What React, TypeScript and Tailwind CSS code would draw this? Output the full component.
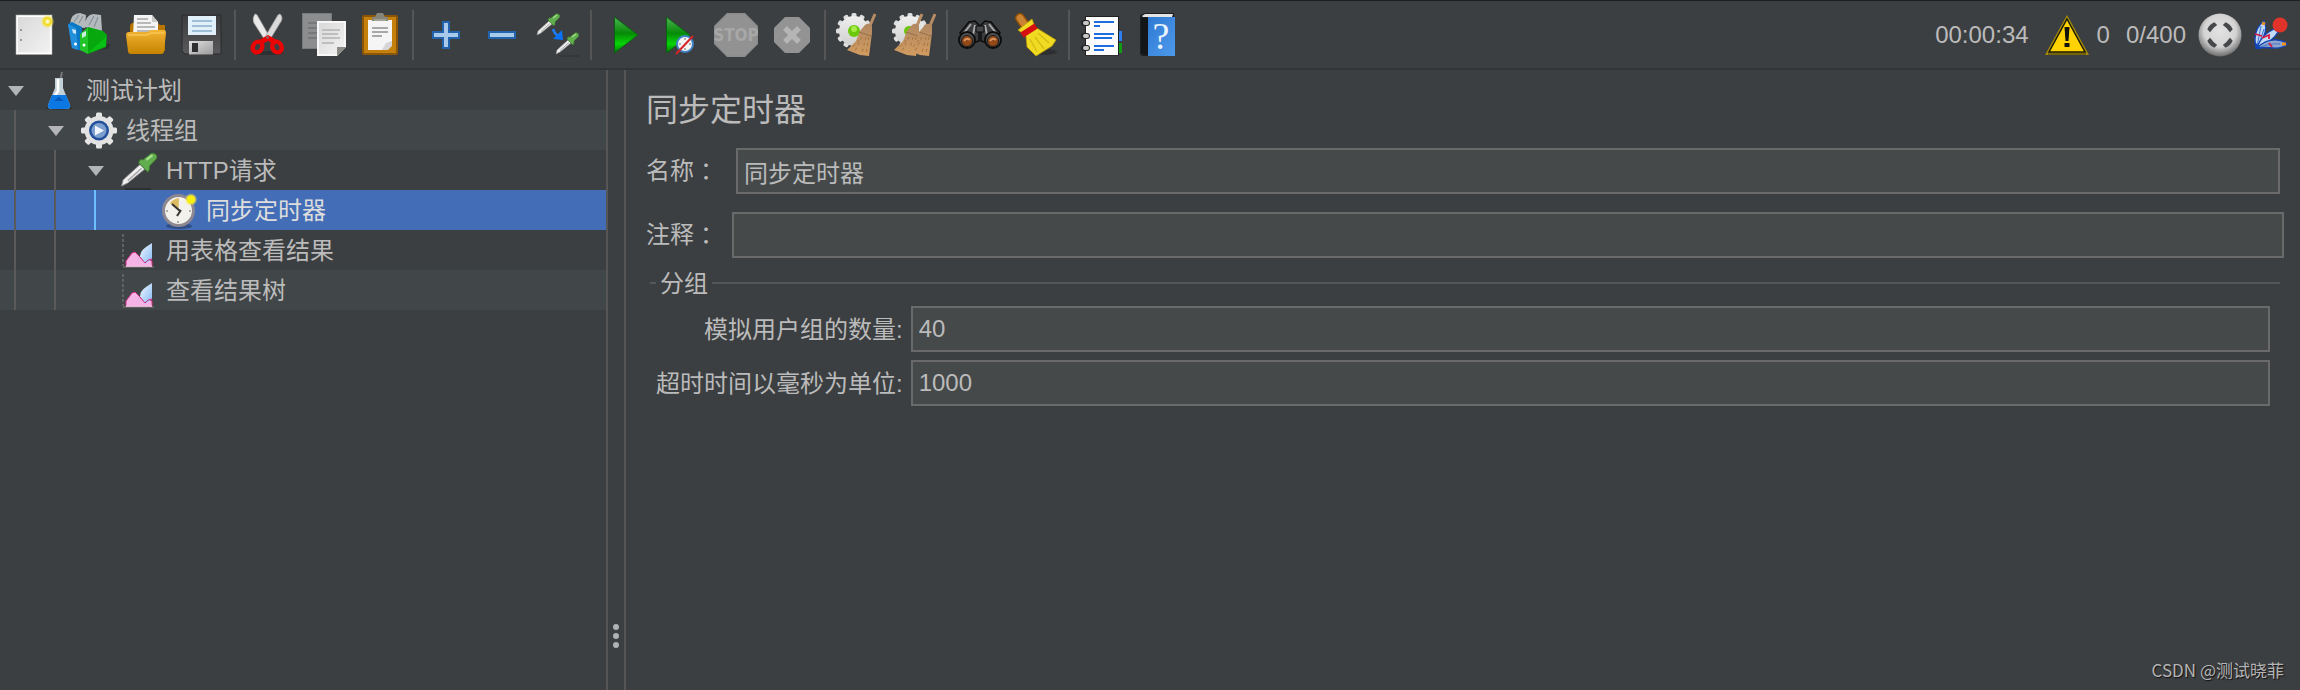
import type { ReactNode } from 'react';

interface IconProps {
  children: ReactNode;
  size?: string;
  box?: string;
}

function Icon({ children, size = 'h-11 w-11', box = '0 0 44 44' }: IconProps) {
  return (
    <svg className={`${size} shrink-0`} viewBox={box} aria-hidden="true">
      {children}
    </svg>
  );
}

interface TeethProps {
  cx: number;
  cy: number;
  r: number;
  width: number;
  fill: string;
  angles?: number[];
}

function Teeth({ cx, cy, r, width, fill, angles = [0, 45, 90, 135] }: TeethProps) {
  return (
    <>
      {angles.map((angle) => (
        <rect
          key={angle}
          x={cx - width / 2}
          y={cy - r}
          width={width}
          height={r * 2}
          rx="1.5"
          fill={fill}
          transform={`rotate(${angle} ${cx} ${cy})`}
        />
      ))}
    </>
  );
}

function Dropper() {
  return (
    <>
      <path d="M1 22l1-4L13 8l3 3L5 20z" fill="#efefef" stroke="#8d8d8d" strokeWidth="0.6" />
      <path d="M5 18.500L14 10.500" stroke="#a9a9a9" strokeWidth="1" />
      <path d="M12 7l6 6 1-2 0-2 4-4c2-2 0-5-3-4l-5 4-2 0z" fill="#62ad4e" stroke="#3d7d2d" strokeWidth="0.6" />
      <path d="M17 5l4-3" stroke="#a5e08d" strokeWidth="1.500" />
    </>
  );
}

function Shades() {
  return (
    <svg className="absolute h-0 w-0" aria-hidden="true">
      <defs>
        <linearGradient id="paper" x1="0" y1="0" x2="1" y2="1">
          <stop offset="0" stopColor="#d9d9d9" />
          <stop offset="1" stopColor="#f2f2f2" />
        </linearGradient>
        <linearGradient id="folder" x1="0" y1="0" x2="0" y2="1">
          <stop offset="0" stopColor="#f3b535" />
          <stop offset="1" stopColor="#c58300" />
        </linearGradient>
        <linearGradient id="metal" x1="0" y1="0" x2="1" y2="1">
          <stop offset="0" stopColor="#e0e0e0" />
          <stop offset="1" stopColor="#9a9a9a" />
        </linearGradient>
        <linearGradient id="disk" x1="0" y1="0" x2="0" y2="1">
          <stop offset="0" stopColor="#3c3c3e" />
          <stop offset="1" stopColor="#59595c" />
        </linearGradient>
        <linearGradient id="go" x1="0" y1="0" x2="0" y2="1">
          <stop offset="0" stopColor="#4fb455" />
          <stop offset="0.45" stopColor="#078a07" />
          <stop offset="0.75" stopColor="#08d508" />
          <stop offset="1" stopColor="#047004" />
        </linearGradient>
        <linearGradient id="cover" x1="0" y1="0" x2="1" y2="1">
          <stop offset="0" stopColor="#2f79d2" />
          <stop offset="1" stopColor="#4d9aec" />
        </linearGradient>
        <linearGradient id="ice" x1="0" y1="0" x2="1" y2="1">
          <stop offset="0" stopColor="#f2faff" />
          <stop offset="1" stopColor="#86b8f5" />
        </linearGradient>
        <linearGradient id="bristle" x1="0" y1="0" x2="0" y2="1">
          <stop offset="0" stopColor="#b08862" />
          <stop offset="1" stopColor="#d29c60" />
        </linearGradient>
        <linearGradient id="gear" x1="0" y1="0" x2="0" y2="1">
          <stop offset="0" stopColor="#efefef" />
          <stop offset="1" stopColor="#cfcfcf" />
        </linearGradient>
        <radialGradient id="glow">
          <stop offset="0" stopColor="#fffde0" />
          <stop offset="0.5" stopColor="#f5e34a" />
          <stop offset="1" stopColor="#f5e34a" stopOpacity="0.25" />
        </radialGradient>
        <radialGradient id="dome" cx="0.5" cy="0.4" r="0.62">
          <stop offset="0" stopColor="#e2e2e2" />
          <stop offset="0.6" stopColor="#d4d4d4" />
          <stop offset="1" stopColor="#626262" />
        </radialGradient>
      </defs>
    </svg>
  );
}

function NewIcon() {
  return (
    <Icon>
      <rect x="4" y="2" width="36" height="39.500" fill="#fff" stroke="#aaa" strokeWidth="0.6" />
      <rect x="6" y="4" width="32" height="35.500" fill="url(#paper)" />
      <path d="M8 17h2M8 27h2" stroke="#999" strokeWidth="2" />
      <circle cx="35.500" cy="8.500" r="6.500" fill="url(#glow)" />
      <circle cx="35.500" cy="8.500" r="3.500" fill="none" stroke="#f2d91c" strokeWidth="1.500" />
    </Icon>
  );
}

function TemplatesIcon() {
  return (
    <Icon>
      <path d="M14 39l26-3 3-4-5-2z" fill="#000" opacity="0.2" />
      <path d="M2 11Q3 0 12 0l6 2-1 13-10-1zM17 14q0-12 8-13l8 1 1 16z" fill="#b4bbbf" />
      <path d="M6 9l5-7M11 10l4-7M21 12l5-9M26 14l4-10" stroke="#8a9297" strokeWidth="1.200" />
      <path d="M0 11l4-2 10 5v24l-10-3z" fill="#0b78c4" />
      <path d="M0 11l8 4 2 22-6-2z" fill="#2390dd" />
      <path d="M12 21l8-7v27l-8-4z" fill="#21c52a" />
      <path d="M20 14l15 4 4 4-1 12-18 7z" fill="#06a80e" />
      <path d="M20 40l18-7V24z" fill="#0bc014" />
      <path d="M4 16l4 1v4l-3-1zM14 20l4-2v5l-4 2z" fill="#e8f6ff" opacity="0.85" />
      <circle cx="7.500" cy="31" r="1.500" fill="#fff" />
      <circle cx="16" cy="32" r="1.500" fill="#fff" />
    </Icon>
  );
}

function OpenIcon() {
  return (
    <Icon>
      <path d="M6 12l2-2h26l2 2h5v26H6z" fill="#b87600" />
      <path d="M10 2h18l6 7v14H9z" fill="#f4f4f4" />
      <path d="M28 2v7h6z" fill="#c9c9c9" />
      <path d="M13 6h11M13 10h14M13 14h18M13 18h18" stroke="#a5a5a5" strokeWidth="1.500" />
      <path d="M2 22q0-3 3-3h18l4-2h13q2 0 2 3l-2 18q0 3-3 3H7q-3 0-3-3z" fill="url(#folder)" />
      <path d="M4 22h19l4-2h13" fill="none" stroke="#ffd068" strokeWidth="1" />
    </Icon>
  );
}

function SaveIcon() {
  return (
    <Icon>
      <path d="M2 2h39v39H5l-3-3z" fill="url(#disk)" stroke="#2b2b2d" strokeWidth="1" />
      <rect x="8" y="3" width="28" height="19" fill="#e2f0fa" />
      <path d="M12 8h20M12 13h20M12 18h20" stroke="#9fbfd9" strokeWidth="2" />
      <rect x="9" y="28" width="24" height="13.500" fill="url(#metal)" />
      <rect x="12" y="30" width="6" height="9" fill="#303032" />
    </Icon>
  );
}

function CutIcon() {
  return (
    <Icon>
      <ellipse cx="22" cy="40" rx="16" ry="2" fill="#000" opacity="0.25" />
      <path d="M9 1q-3 4-1 9l11 17 4-4L11 2z" fill="#e9e9e9" stroke="#b5b5b5" strokeWidth="0.8" />
      <path d="M34 1q4 4 0 9L23 28l-4-4L32 2z" fill="#dadada" stroke="#a8a8a8" strokeWidth="0.8" />
      <path d="M15 29l7-4 7 4" stroke="#e00" strokeWidth="5" fill="none" />
      <ellipse cx="11.500" cy="34" rx="4.500" ry="5.500" fill="none" stroke="#e80505" strokeWidth="4.500" transform="rotate(30 11.500 34)" />
      <ellipse cx="31" cy="34" rx="4.500" ry="5.500" fill="none" stroke="#e80505" strokeWidth="4.500" transform="rotate(-30 31 34)" />
      <circle cx="21.500" cy="24.500" r="1.300" fill="#777" />
    </Icon>
  );
}

function CopyIcon() {
  return (
    <Icon>
      <rect x="0.500" y="0.500" width="29" height="35" fill="#8c8d8e" stroke="#77797a" />
      <path d="M6 10h18M6 15h18M6 20h18M6 25h18" stroke="#707273" strokeWidth="1.500" />
      <path d="M15 8h29v26l-9 9H15z" fill="#f7f7f7" />
      <path d="M17 10h25v23l-8 8H17z" fill="url(#paper)" />
      <path d="M20 17h18M20 21h16M20 25h18M20 30h12" stroke="#b3b3b3" strokeWidth="1.500" />
      <path d="M44 34l-9 9v-9z" fill="#8b8b86" />
    </Icon>
  );
}

function PasteIcon() {
  return (
    <Icon>
      <rect x="5" y="3" width="34" height="38" rx="1" fill="#c47f0c" stroke="#8a5608" strokeWidth="2" />
      <path d="M10 7h24v22l-8 8H10z" fill="#f5f5f5" />
      <path d="M14 15h16M14 19h16M14 23h10" stroke="#8f8f8f" strokeWidth="1.600" />
      <path d="M34 28v5l-4 4h-6l4-7z" fill="#d6d6d6" />
      <path d="M14 8V4h3l2-4h6l2 4h3v4z" fill="#85857a" />
      <path d="M16 7h12" stroke="#acaca0" strokeWidth="1.500" />
    </Icon>
  );
}

function AddIcon() {
  return (
    <Icon>
      <path d="M19 9h6v10h10v6H25v10h-6V25H9v-6h10z" fill="#a9c9ea" stroke="#2163ad" strokeWidth="2" />
    </Icon>
  );
}

function RemoveIcon() {
  return (
    <Icon>
      <rect x="9" y="19" width="26" height="6" fill="#a9c9ea" stroke="#2163ad" strokeWidth="2" />
    </Icon>
  );
}

function ToggleIcon() {
  return (
    <Icon>
      <path d="M23 43h20" stroke="#222" strokeWidth="1" opacity="0.5" />
      <Dropper />
      <g transform="translate(19 19)">
        <Dropper />
      </g>
      <path d="M17 16q2 6 7 8" fill="none" stroke="#1e7cf2" strokeWidth="2.500" />
      <path d="M26 17l1 10-10-1z" fill="#0b72f5" />
    </Icon>
  );
}

function StartIcon() {
  return (
    <Icon>
      <path d="M12.500 4l23.500 18-23.500 18z" fill="url(#go)" stroke="#0a5f12" strokeWidth="1" />
    </Icon>
  );
}

function StartNowIcon() {
  return (
    <Icon>
      <path d="M8.500 4L32 22 8.500 40z" fill="url(#go)" stroke="#0a5f12" strokeWidth="1" />
      <circle cx="27" cy="31" r="8" fill="#f1f3f5" stroke="#3f82c4" strokeWidth="2" />
      <path d="M27 25v2M27 35v2M21 31h2M31 31h2" stroke="#999" strokeWidth="1.500" />
      <path d="M18 41l17-18" stroke="#d8232a" strokeWidth="2" />
    </Icon>
  );
}

function StopIcon() {
  return (
    <Icon>
      <path d="M13 0h18l13 13v18L31 44H13L0 31V13z" fill="#8c8c8c" />
      <path d="M13.500 1.500h17l12 12v17l-12 12h-17l-12-12v-17z" fill="#929292" />
      <text x="22" y="28" textAnchor="middle" fontSize="17" fontWeight="700" fill="#a7a7a7" fontFamily="Liberation Sans Narrow, DejaVu Sans Condensed, sans-serif">
        STOP
      </text>
    </Icon>
  );
}

function ShutdownIcon() {
  return (
    <Icon>
      <path d="M15 4h14l11 11v14L29 40H15L4 29V15z" fill="#939393" />
      <path d="M15 15l14 14M29 15L15 29" stroke="#b5b5b5" strokeWidth="5.500" />
    </Icon>
  );
}

function Bristles({ dx }: { dx: number }) {
  return (
    <g transform={`translate(${dx} 0)`}>
      <path d="M39 1l-6 14" stroke="#b58c63" strokeWidth="3" />
      <path d="M29 12q4-3 7 1l0 7-3 23-9-1-13-5 9-9 4-10z" fill="url(#bristle)" />
      <path d="M26 24l-7 14M30 24l-4 16M33 24l-3 17M23 27l-8 9" stroke="#a8753f" strokeWidth="1" strokeDasharray="3 3" />
      <path d="M23 19l12 4" stroke="#96704a" strokeWidth="1" />
    </g>
  );
}

const fineTeeth = [0, 30, 60, 90, 120, 150];

function ClearIcon() {
  return (
    <Icon>
      <Teeth cx={18} cy={18} r={18} width={5} fill="#dedede" angles={fineTeeth} />
      <circle cx="18" cy="18" r="15" fill="url(#gear)" />
      <circle cx="18" cy="18" r="6" fill="#6cc80b" />
      <circle cx="18" cy="16" r="3" fill="#a5ec48" />
      <Bristles dx={0} />
    </Icon>
  );
}

function ClearAllIcon() {
  return (
    <Icon>
      <Teeth cx={18} cy={18} r={18} width={5} fill="#dedede" angles={fineTeeth} />
      <circle cx="18" cy="18" r="15" fill="url(#gear)" />
      <circle cx="17" cy="18" r="5" fill="#6cc80b" />
      <Bristles dx={-9} />
      <Bristles dx={4} />
    </Icon>
  );
}

function SearchIcon() {
  return (
    <Icon>
      <path d="M11 9l6-1 4 4v16l-6 2L2 20zM33 9l-6-1-4 4v16l6 2 13-10z" fill="#3a3c3d" stroke="#0c0c0c" strokeWidth="1.500" />
      <path d="M13 11l-7 9M17 12l-2 10M31 11l7 9M27 12l2 10" stroke="#a4a6a8" strokeWidth="2" />
      <path d="M18 13h8v6h-8z" fill="#454849" stroke="#0c0c0c" />
      <circle cx="9" cy="27" r="8" fill="#4d4f50" stroke="#0d0d0d" strokeWidth="2" />
      <circle cx="35" cy="27" r="8" fill="#4d4f50" stroke="#0d0d0d" strokeWidth="2" />
      <circle cx="9" cy="28" r="5.500" fill="#934818" stroke="#1b1b1b" />
      <circle cx="35" cy="28" r="5.500" fill="#934818" stroke="#1b1b1b" />
      <path d="M6 28q3-4 6-1M32 28q3-4 6-1" stroke="#d79362" strokeWidth="2" fill="none" />
    </Icon>
  );
}

function ResetIcon() {
  return (
    <Icon>
      <ellipse cx="30" cy="39" rx="13" ry="3" fill="#000" opacity="0.25" />
      <path d="M6 5l7 10" stroke="#8e4e05" strokeWidth="10" strokeLinecap="round" />
      <path d="M6 5l7 10" stroke="#c98333" strokeWidth="7" strokeLinecap="round" />
      <path d="M4 17L18 6l3 8 21 13-4 6-16 10-9-9-1-11z" fill="#f0da22" stroke="#b99a08" strokeWidth="0.8" />
      <path d="M16 26l7 13M21 24l9 12M24 20l11 10" stroke="#d8bb14" strokeWidth="1.300" />
      <path d="M8 22l14-9" stroke="#d50f0f" strokeWidth="6" />
    </Icon>
  );
}

function HelperIcon() {
  return (
    <Icon>
      <rect x="37" y="18" width="5" height="10" fill="#2d7ff0" />
      <rect x="37" y="30" width="5" height="10" fill="#119b12" />
      <rect x="5" y="3" width="34" height="39.500" fill="#1e2021" />
      <rect x="6" y="4" width="32" height="38" fill="#fcfcfc" />
      <path d="M14 9h20M14 21h20M14 25h18M14 33h20" stroke="#1c6ee0" strokeWidth="2" />
      <path d="M14 13h6M14 37h10" stroke="#1c6ee0" strokeWidth="2" />
      {[10, 23, 35].map((y) => (
        <g key={y}>
          <rect x="1" y={y - 3} width="9" height="6" rx="3" fill="#232526" />
          <rect x="3" y={y - 2} width="6" height="4" rx="2" fill="#c9c9c9" />
        </g>
      ))}
    </Icon>
  );
}

function HelpIcon() {
  return (
    <Icon>
      <path d="M4 2l5-2h29v41l-2 2H6l-2-2z" fill="#1c1e20" />
      <path d="M6 3l3-2h28l-1 3H7z" fill="#e3e3e3" />
      <rect x="12" y="4" width="27" height="39" fill="url(#cover)" />
      <path d="M5 5h7v37l-7-2z" fill="#141516" />
      <text x="25" y="36" textAnchor="middle" fontSize="38" fill="#eaf4ff" fontFamily="Liberation Serif, serif">
        ?
      </text>
    </Icon>
  );
}

function WarningIcon() {
  return (
    <Icon>
      <path d="M22 2l22 40H0z" fill="#a58a05" />
      <path d="M22 6l18 33H4z" fill="#ffd303" stroke="#1c1a08" strokeWidth="1.500" />
      <path d="M3 41h38" stroke="#77640a" strokeWidth="2" />
      <path d="M19.500 14h5l-1 14h-3z" fill="#14130a" />
      <rect x="19.500" y="30" width="5" height="4" fill="#14130a" />
    </Icon>
  );
}

function EngineIcon() {
  return (
    <Icon>
      <circle cx="22" cy="22" r="21.500" fill="url(#dome)" />
      {[45, 135, 225, 315].map((angle) => (
        <path
          key={angle}
          d="M17 9q5-2 10 0v4q-5-1-10 0z"
          fill="#46484a"
          transform={`rotate(${angle} 22 22)`}
        />
      ))}
    </Icon>
  );
}

function FeatherIcon() {
  return (
    <Icon size="h-9 w-9" box="0 0 36 36">
      <path d="M4 31Q0 13 12 4q4 7-1 17z" fill="#bfd7f6" stroke="#1246b5" strokeWidth="1.300" />
      <path d="M5 30L9 9M6 30l6-18" stroke="#3d73d6" strokeWidth="1" />
      <path d="M5 31Q9 18 22 12l4 3q-5 9-20 16z" fill="#c4daf5" stroke="#1246b5" strokeWidth="1.300" />
      <path d="M5 31q9-9 20-8 8 1 10 4-5 5-14 4-8-1-16 0z" fill="#8ea6cd" stroke="#1246b5" strokeWidth="1.300" />
      <path d="M8 30q12-4 20-3" stroke="#4a75c4" strokeWidth="1" fill="none" />
      <path d="M2 24l3 8 5 0z" fill="#1246b5" />
      <path d="M3 17l7 2M10 21l7-3 0 4M17 26l3 4" stroke="#d71942" strokeWidth="1.800" fill="none" />
      <path d="M11 8l1-3M30 27l4 0" stroke="#f2911b" strokeWidth="3" />
      <circle cx="28" cy="8" r="7.500" fill="#e0342b" />
    </Icon>
  );
}

function FlaskIcon() {
  return (
    <Icon size="h-10 w-10" box="0 0 40 40">
      <ellipse cx="19" cy="38" rx="13" ry="1.500" fill="#111" opacity="0.5" />
      <path d="M22 2l-2 10" stroke="#777" strokeWidth="2" />
      <path d="M15 8h8v10l7 17q1 4-4 4H12q-5 0-4-4l7-17z" fill="#c3d0d8" />
      <path d="M18 9v12l-4 6" fill="none" stroke="#fff" strokeWidth="2.500" />
      <path d="M12 25h14l4 10q1 4-4 4H12q-5 0-4-4z" fill="#0b78e3" />
      <path d="M14 31l5-4 5 4z" fill="#0756ba" />
    </Icon>
  );
}

function ThreadIcon() {
  return (
    <Icon size="h-10 w-10" box="0 0 40 40">
      <Teeth cx={19} cy={20.5} r={18} width={6} fill="#e6e6e6" />
      <circle cx="19" cy="20.500" r="14.500" fill="#e2e2e2" />
      <circle cx="19" cy="20.500" r="10" fill="#23509b" />
      <circle cx="19" cy="20.500" r="7.500" fill="#7c9fcd" />
      <path d="M15 15.500l9 5-9 5z" fill="#f0f6ff" />
    </Icon>
  );
}

function SamplerIcon() {
  return (
    <Icon size="h-10 w-10" box="0 0 40 40">
      <g transform="translate(0 2) scale(1.550)">
        <Dropper />
      </g>
      <path d="M5 39h26" stroke="#1d1f20" strokeWidth="1.500" opacity="0.6" />
    </Icon>
  );
}

function TimerIcon() {
  return (
    <Icon size="h-10 w-10" box="0 0 40 40">
      <ellipse cx="19" cy="36" rx="13" ry="3" fill="#1c2f57" opacity="0.5" />
      <circle cx="18.500" cy="20.500" r="15" fill="#f3f1ec" stroke="#8c8790" strokeWidth="3" />
      <path d="M18.500 20.500L10 13q3-4 9-5z" fill="#dcbb62" />
      <path d="M12 14l8 7M21 20l-4 6" stroke="#343434" strokeWidth="2" />
      <path d="M18 31v2M29 21h2M6 21h2" stroke="#999" strokeWidth="1.500" />
      <circle cx="31" cy="9.500" r="6" fill="url(#glow)" />
      <circle cx="31" cy="9.500" r="4" fill="#f8f011" />
    </Icon>
  );
}

function ListenerIcon() {
  return (
    <Icon size="h-10 w-10" box="0 0 40 40">
      <path d="M3 4v32" stroke="#6b6d6e" strokeWidth="1.500" strokeDasharray="3 2" />
      <path d="M3 37h31" stroke="#6b6d6e" strokeWidth="1.500" />
      <path d="M6 31l6-8 3-1 5 5 5 6 4-3 3 1v5H6z" fill="#f6b3e6" stroke="#cf2f82" strokeWidth="1" />
      <path d="M20 27q0-6 6-10l6-4v16l-4 3-3 2z" fill="url(#ice)" />
      <path d="M20 27l5 6 3-3 4-1" stroke="#d1307f" strokeWidth="1" fill="none" />
      <path d="M6 36h26" stroke="#fbd3f3" strokeWidth="1.500" />
    </Icon>
  );
}

const toolGroups = [
  [
    { label: '新建', icon: <NewIcon /> },
    { label: '模板', icon: <TemplatesIcon /> },
    { label: '打开', icon: <OpenIcon /> },
    { label: '保存', icon: <SaveIcon /> },
  ],
  [
    { label: '剪切', icon: <CutIcon /> },
    { label: '复制', icon: <CopyIcon /> },
    { label: '粘贴', icon: <PasteIcon /> },
  ],
  [
    { label: '展开', icon: <AddIcon /> },
    { label: '收起', icon: <RemoveIcon /> },
    { label: '切换', icon: <ToggleIcon /> },
  ],
  [
    { label: '启动', icon: <StartIcon /> },
    { label: '不停顿启动', icon: <StartNowIcon /> },
    { label: '停止', icon: <StopIcon /> },
    { label: '关闭', icon: <ShutdownIcon /> },
  ],
  [
    { label: '清除', icon: <ClearIcon /> },
    { label: '清除全部', icon: <ClearAllIcon /> },
  ],
  [
    { label: '查找', icon: <SearchIcon /> },
    { label: '重置查找', icon: <ResetIcon /> },
  ],
  [
    { label: '函数助手', icon: <HelperIcon /> },
    { label: '帮助', icon: <HelpIcon /> },
  ],
];

function Toolbar() {
  return (
    <header className="flex items-center border-t border-b-2 border-t-[#1c1e20] border-b-[#323537] py-1 pr-3 pl-[6px]">
      {toolGroups.map((group, i) => (
        <div key={i} className="flex items-center">
          {i > 0 && <span className="mx-1 h-[50px] w-[2px] bg-[#565656]" />}
          {group.map((tool) => (
            <button key={tool.label} type="button" aria-label={tool.label} className="flex h-[59px] w-14 items-center justify-center">
              {tool.icon}
            </button>
          ))}
        </div>
      ))}
      <div className="ml-auto flex items-center text-[#bbbbbb]">
        <span className="mr-4">00:00:34</span>
        <button type="button" className="mr-4 flex items-center gap-2">
          <WarningIcon />
          <span>0</span>
        </button>
        <span className="mr-3">0/400</span>
        <span className="mr-[10px]">
          <EngineIcon />
        </span>
        <FeatherIcon />
      </div>
    </header>
  );
}

interface TreeNode {
  label: string;
  depth: number;
  icon: ReactNode;
  open?: boolean;
  selected?: boolean;
}

const nodes: TreeNode[] = [
  { label: '测试计划', depth: 0, icon: <FlaskIcon />, open: true },
  { label: '线程组', depth: 1, icon: <ThreadIcon />, open: true },
  { label: 'HTTP请求', depth: 2, icon: <SamplerIcon />, open: true },
  { label: '同步定时器', depth: 3, icon: <TimerIcon />, selected: true },
  { label: '用表格查看结果', depth: 2, icon: <ListenerIcon /> },
  { label: '查看结果树', depth: 2, icon: <ListenerIcon /> },
];

function TreeRow({ node, striped }: { node: TreeNode; striped: boolean }) {
  const background = node.selected ? 'bg-[#436db6] text-[#dddddd]' : striped ? 'bg-[#414648]' : '';
  return (
    <li role="treeitem" aria-selected={!!node.selected} aria-level={node.depth + 1} className={`flex h-10 items-center ${background}`}>
      {Array.from({ length: node.depth }, (_, i) => (
        <span key={i} className="flex h-10 w-10 shrink-0 pl-[14px]">
          <span className={`w-[2px] ${i === 2 ? 'bg-[#6cc0ff]' : 'bg-[#5a5a5a]'}`} />
        </span>
      ))}
      <span className="flex h-10 w-10 shrink-0 items-center pl-2">
        {node.open && (
          <button type="button" aria-label={`收起 ${node.label}`}>
            <svg className="h-4 w-4" viewBox="0 0 16 16">
              <path d="M0 4h16L8 14z" fill="#b3b5b6" />
            </svg>
          </button>
        )}
      </span>
      {node.icon}
      <span className="ml-[6px] pt-[2px] leading-8">{node.label}</span>
    </li>
  );
}

function Field({ id, label, value = '' }: { id: string; label: string; value?: string }) {
  return (
    <>
      <label htmlFor={id} className="pt-[2px] text-right leading-8 whitespace-nowrap">
        {label}
      </label>
      <TextBox id={id} value={value} />
    </>
  );
}

function TextBox({ id, value }: { id: string; value: string }) {
  return (
    <input
      id={id}
      type="text"
      defaultValue={value}
      className="h-[46px] w-full min-w-0 flex-1 border-2 border-[#6a6a6a] bg-[#45494a] px-[6px] text-[#bbbbbb] outline-none"
    />
  );
}

function WideColon() {
  return <span className="inline-block w-6 pl-[6px]">：</span>;
}

export default function App() {
  return (
    <div className="relative flex min-h-screen flex-col bg-[#3c3f41] font-['Liberation_Sans','Noto_Sans_CJK_SC',sans-serif] text-2xl text-[#bbbbbb]">
      <Shades />
      <Toolbar />
      <div className="flex flex-1">
        <ul role="tree" className="w-[608px] shrink-0 border-r-2 border-[#565656]">
          {nodes.map((node, i) => (
            <TreeRow key={node.label} node={node} striped={i % 2 === 1} />
          ))}
        </ul>
        <div className="flex w-[18px] shrink-0 flex-col items-center justify-end gap-[3px] border-r-2 border-[#565656] pb-[42px]">
          <span className="h-[6px] w-[6px] rounded-full bg-[#afb1b3]" />
          <span className="h-[6px] w-[6px] rounded-full bg-[#afb1b3]" />
          <span className="h-[6px] w-[6px] rounded-full bg-[#afb1b3]" />
        </div>
        <main className="min-w-0 flex-1 pt-5 pr-4 pl-5">
          <h1 className="text-[32px] leading-10">同步定时器</h1>
          <div className="mt-[18px] mr-1 flex items-center gap-[18px]">
            <label htmlFor="name" className="leading-8 whitespace-nowrap">
              名称
              <WideColon />
            </label>
            <TextBox id="name" value="同步定时器" />
          </div>
          <div className="mt-[18px] flex items-center gap-[14px]">
            <label htmlFor="comment" className="leading-8 whitespace-nowrap">
              注释
              <WideColon />
            </label>
            <TextBox id="comment" value="" />
          </div>
          <fieldset className="mx-1 mt-2 border-t-2 border-[#565656] pt-[6px] pr-[10px] pl-[6px]">
            <legend className="px-1 pt-[2px] leading-8">分组</legend>
            <div className="grid grid-cols-[auto_1fr] items-center gap-2">
              <Field id="group-size" label="模拟用户组的数量:" value="40" />
              <Field id="timeout" label="超时时间以毫秒为单位:" value="1000" />
            </div>
          </fieldset>
        </main>
      </div>
      <span className="absolute right-4 bottom-2 font-['Noto_Sans_CJK_SC',sans-serif] text-[17px] leading-6 text-[#b4b4b4] [text-shadow:1px_1px_1px_#111]">
        CSDN @测试晓菲
      </span>
    </div>
  );
}
